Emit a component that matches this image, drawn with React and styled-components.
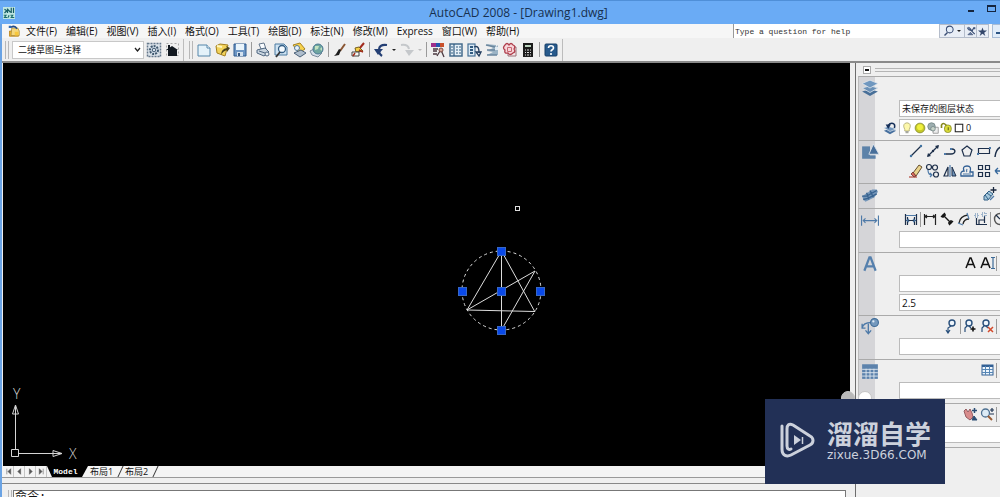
import React from "react";
import styled, { createGlobalStyle, css } from "styled-components";

const GlobalStyle = createGlobalStyle`
  *, *::before, *::after { box-sizing: border-box; }
  html, body, #root { height: 100%; }
  body {
    margin: 0;
    overflow: hidden;
    font-family: "Open Sans", "Noto Sans CJK SC", sans-serif;
    color: #111;
    background: #efefef;
  }
  button, input, select { font: inherit; color: inherit; margin: 0; padding: 0; border-radius: 0; }
`;

/* ---------- drawings ---------- */

const line = { fill: "none", stroke: "#1d2f4a", strokeWidth: 1.2 };
const blue = { fill: "none", stroke: "#4e7aa8", strokeWidth: 1.2 };

const glyphs = {
  app: (
    <>
      <rect x="0" y="0" width="16" height="16" fill="#bfe6e2" />
      <path d="M2 3l3 2-3 3M6 2v6M6 3l4 4M11 1v7M14 1v7" fill="none" stroke="#175d63" strokeWidth="1.6" />
      <path d="M1 11h3l-2 3h4M8 11l-1 3M10 11h3l-2 3h4" fill="none" stroke="#1d6d6c" strokeWidth="1.5" />
    </>
  ),
  doc: (
    <>
      <path d="M2 8h12v7H2z" fill="#efb52c" stroke="#b67c12" />
      <path d="M5 4h8l2 4v6H4z" fill="#f5d77c" stroke="#a98a3a" />
      <path d="M1 1h3v3H1z" fill="#3069b1" />
      <path d="M4 3q5-3 8 2" fill="none" stroke="#234c8a" strokeWidth="2" />
      <path d="M9 9h5v5H9z" fill="#f7c73c" />
    </>
  ),
  gear: (
    <>
      <path d="M1.500 1.500h13v13h-13z" fill="#dde5ec" stroke="#66798c" strokeDasharray="2 1" strokeWidth="1.500" />
      <circle cx="8" cy="8" r="4" fill="#d7e2ed" stroke="#3f586f" strokeWidth="2" strokeDasharray="2 1" />
      <circle cx="8" cy="8" r="1.800" fill="none" stroke="#3f586f" />
    </>
  ),
  home: (
    <>
      <path d="M2.500 1.500h12v12h-12z" fill="none" stroke="#aaa" strokeDasharray="2 2" />
      <path d="M2 8l6-4 6 4h-1v6H4V8z" fill="#111820" />
      <path d="M4 3h2v4H4z" fill="#111820" />
    </>
  ),
  file: (
    <>
      <path d="M2 3h9l3 3v8H2z" fill="#e4f2fa" stroke="#5486aa" />
      <path d="M11 3v3h3" fill="#fff" stroke="#5486aa" />
    </>
  ),
  open: (
    <>
      <path d="M2 4l4-2 8 1-3 11-8-3z" fill="#f2d25a" stroke="#a37f20" />
      <path d="M7 13q0-6 6-7l-1-2 4 2-3 4v-2q-4 1-6 5z" fill="#494219" />
      <path d="M3 4l5 1" stroke="#fff6c0" strokeWidth="2" />
    </>
  ),
  save: (
    <>
      <path d="M2 2h12v12H2z" fill="#6c95c3" stroke="#2f5a8e" />
      <path d="M4 2h8v6H4z" fill="#e9f4fb" />
      <path d="M5 10h6v4H5z" fill="#d3e1ee" />
      <path d="M6 11h2v3H6z" fill="#33557f" />
    </>
  ),
  print: (
    <>
      <path d="M4 2l5-1 2 6H6z" fill="#f9fcff" stroke="#63758a" />
      <path d="M2 8l8-2 4 4-5 4-7-3z" fill="#c8d4df" stroke="#4f6781" />
      <path d="M4 9l6 2" stroke="#4f6781" />
      <circle cx="12" cy="12" r="2" fill="#e7edf2" stroke="#4f6781" />
    </>
  ),
  preview: (
    <>
      <path d="M2 2h9l3 3v8H2z" fill="#cfe3f2" stroke="#4b7aa1" />
      <circle cx="9" cy="7" r="3.500" fill="#f5fbff" stroke="#345f86" strokeWidth="1.300" />
      <path d="M7 10l-4 5" stroke="#333" strokeWidth="1.800" />
    </>
  ),
  publish: (
    <>
      <path d="M2 3l7-2 5 6-6 4z" fill="#f7d24c" stroke="#a78221" />
      <circle cx="6" cy="6" r="2.500" fill="#e8f3fb" stroke="#54799a" />
      <path d="M3 11l7-3 5 3-6 4z" fill="#aebdcc" stroke="#4b6178" />
    </>
  ),
  globe: (
    <>
      <path d="M1 9l6-3 6 5-4 4-6-2z" fill="#d4dfe8" stroke="#7b8c9d" />
      <circle cx="9" cy="7" r="5" fill="#6fa6a0" stroke="#4b7894" />
      <path d="M6 4l4 0-1 3-3 1zM11 7l2-2v4z" fill="#c3e2c0" />
    </>
  ),
  brush: (
    <>
      <path d="M13 2L8 9" stroke="#8a5633" strokeWidth="2" />
      <path d="M9 8l-2-1-3 5-2 2 5-1z" fill="#1c1c1c" />
    </>
  ),
  match: (
    <>
      <path d="M14 1L9 7" stroke="#a22b1e" strokeWidth="2" />
      <path d="M5 6l4-1 4 4-7 1z" fill="#f4d046" stroke="#78601d" />
      <path d="M2 10h7v4H2z" fill="#f8f8f3" stroke="#454545" />
      <path d="M5 11l-2 3M9 8l4 2" stroke="#a22b1e" strokeWidth="1.500" />
    </>
  ),
  undo: (
    <>
      <path d="M14 3Q7 2 6 7q-1 4 3 7" fill="none" stroke="#243f74" strokeWidth="2.200" />
      <path d="M1 7h9l-5 6z" fill="#243f74" />
    </>
  ),
  redo: (
    <>
      <path d="M2 3q7-1 8 4" fill="none" stroke="#c5c8cb" strokeWidth="2" />
      <path d="M6 8h9l-5 6z" fill="#c5c8cb" />
    </>
  ),
  props: (
    <>
      <path d="M1 1h5v4H1z" fill="#a02f8a" />
      <path d="M6 1h4v4H6z" fill="#2757b0" />
      <path d="M10 1h4v4h-4z" fill="#c9502a" />
      <path d="M3 7h5M3 9h4M3 12h4M11 8l3 7M10 9l-3 5" stroke="#4a3940" strokeWidth="1.300" />
      <circle cx="11" cy="8" r="2" fill="#d5a597" stroke="#784a42" />
    </>
  ),
  center: (
    <>
      <rect x="2" y="2" width="12" height="12" fill="#e6f0f7" stroke="#466c8d" strokeWidth="1.500" />
      <path d="M6 2v12M8 5h2m1 0h2M8 8h2m1 0h2M8 11h2m1 0h2M3 5h2M3 8h2M3 11h2" stroke="#315b80" strokeWidth="1.200" />
    </>
  ),
  palettes: (
    <>
      <rect x="2" y="2" width="7" height="12" fill="#dceaf5" stroke="#477196" strokeWidth="1.200" />
      <path d="M4 5h3M4 8h3M4 11h3" stroke="#315b80" strokeWidth="2" />
      <path d="M8 5c5-2 5 3 5 6M10 10h5l-2 4z" fill="none" stroke="#233e60" strokeWidth="1.300" />
    </>
  ),
  sheets: (
    <>
      <path d="M2 2l10 1v2l2-2v10H3l6-3-6-1 6-3z" fill="#9bb3c5" />
      <path d="M2 3l9 2M3 8h8M3 13h10" stroke="#6b879e" strokeWidth="1.400" />
      <path d="M11 5h3v3h-3z" fill="#e0ebf2" />
    </>
  ),
  markup: (
    <>
      <path d="M6 5h8v9H6z" fill="#f5e9ea" stroke="#9b7178" />
      <path d="M3 3q2-3 4 0 2-3 4 0 3 1 1 4 2 3-1 4-3 3-5 0-4 1-3-3-3-2 0-5z" fill="#f6d5d9" stroke="#b03e4c" strokeWidth="1.300" />
      <path d="M5.500 5.500h4v4h-4z" fill="none" stroke="#c86772" />
    </>
  ),
  calc: (
    <>
      <rect x="3" y="1" width="10" height="14" fill="#1b1b1b" />
      <path d="M5 3h6v2H5z" fill="#b9d3bd" />
      <path d="M5 8h1m1 0h2m1 0h1M5 10.500h1m1 0h2m1 0h1M5 13h1m1 0h2m1 0h1" stroke="#ddd" strokeWidth="1.200" />
    </>
  ),
  help: (
    <>
      <rect x="2" y="2" width="12" height="12" rx="1" fill="#275a8c" stroke="#173f68" />
      <path d="M5.500 6c0-3 5-3 5 0 0 2-2.500 1.500-2.500 3.500M8 11v2" fill="none" stroke="#fff" strokeWidth="1.600" />
    </>
  ),
  search: (
    <>
      <circle cx="9" cy="6" r="4.500" fill="#e4edf8" stroke="#3b4e75" strokeWidth="1.400" />
      <path d="M6 10l-4 4" stroke="#3b4e75" strokeWidth="2" />
    </>
  ),
  comm: (
    <>
      <path d="M2 3q4-3 7 4-6 1-7-4z" fill="#66799e" stroke="#364a71" />
      <path d="M6 5l8 8M9 9l4-7M14 2v3" fill="none" stroke="#364a71" strokeWidth="1.800" />
      <path d="M3 14l4-4 4 4z" fill="#66799e" stroke="#364a71" />
    </>
  ),
  star: <path d="M8 1l2 5h6l-5 4 2 6-5-4-5 4 2-6-5-4h6z" fill="#33466a" />,
  layers: (
    <>
      <path d="M1 11l7-2 7 2-7 4z" fill="#486f98" />
      <path d="M1 8l7-2 7 2-7 4z" fill="#6a90b6" stroke="#dfe6ec" strokeWidth=".7" />
      <path d="M1 4l7-3 7 3-7 4z" fill="#6f97bf" stroke="#dfe6ec" strokeWidth=".7" />
    </>
  ),
  shapes: (
    <>
      <path d="M1 3h7v11H1z" fill="#5c82a9" />
      <path d="M8 11h5v3H8z" fill="#5c82a9" />
      <path d="M11 1l5 9H7z" fill="#486f9a" stroke="#dce3ea" strokeWidth=".8" />
    </>
  ),
  dash: (
    <>
      <path d="M1 9l9-6h4l1 2-3 5-8 4-2-2z" fill="#7496b9" />
      <path d="M1 9h4l9-5M2 12l4-1 8-4M5 6l2 6M8 4l3 6" fill="none" stroke="#39638f" strokeWidth="1.200" />
    </>
  ),
  dim: <path d="M.500 4v9M15.500 4v9M2 8.500h12M4 6.500l-2 2 2 2M12 6.500l2 2-2 2" {...blue} strokeWidth="1" />,
  bigA: <path d="M3 14L7.500 2h1L13 14M5 10h6" fill="none" stroke="#5580ad" strokeWidth="2" />,
  leader: (
    <>
      <path d="M1 9q1-5 8-5M6.500 5v9M1 5v4h3M4 11l2.500 3L9 11" {...blue} />
      <circle cx="12" cy="4" r="3.500" fill="#7599bd" stroke="#426e99" />
      <circle cx="11" cy="3" r="1" fill="#e2edf7" />
    </>
  ),
  table: (
    <>
      <rect x="1" y="2" width="14" height="13" fill="#5c82ac" />
      <path d="M1 6.500h14M1 9.500h14M1 12.500h14M4.500 6v9M8 6v9M11.500 6v9" stroke="#e0e8ef" strokeWidth=".8" />
    </>
  ),
  tableSm: (
    <>
      <rect x="3" y="3" width="11" height="10" fill="#edf5fc" stroke="#315f94" />
      <path d="M3 4h11" stroke="#315f94" strokeWidth="2" />
      <path d="M3 7.500h11M3 10.500h11M6.500 4v9M10.500 4v9" stroke="#5686b5" />
    </>
  ),
  layerPrev: (
    <>
      <path d="M1 11l6-2 8 2-7 4z" fill="#466f9e" />
      <path d="M1 8l5-2 9 3-7 3z" fill="#7497bd" stroke="#e5ebf0" strokeWidth=".7" />
      <path d="M13 8c2-6-4-7-7-3" fill="none" stroke="#16305a" strokeWidth="1.800" />
      <path d="M3 4h6l-3 5z" fill="#16305a" />
    </>
  ),
  bulb: (
    <>
      <path d="M5 10Q1 2 8 1q7 1 3 9v2H5z" fill="#fdf8ac" stroke="#a6a16b" />
      <path d="M6 12h4v3H6z" fill="#a7a89f" />
    </>
  ),
  sun: (
    <>
      <circle cx="8" cy="8" r="6.500" fill="#c5c929" stroke="#80862b" />
      <circle cx="8" cy="7" r="4" fill="#f0f03e" />
    </>
  ),
  vpFreeze: (
    <>
      <path d="M8 7h7v8H8z" fill="#eee" stroke="#888" />
      <circle cx="6" cy="6" r="5" fill="#9daeaf" stroke="#6d8081" />
      <circle cx="8" cy="9" r="3" fill="#c7d3c9" stroke="#6d8081" />
    </>
  ),
  lock: (
    <>
      <path d="M2 8V4q2-4 6 0v2" fill="none" stroke="#85861e" strokeWidth="2.200" />
      <rect x="6" y="4" width="9" height="10" rx="4" fill="#dadc39" stroke="#7f831f" />
      <path d="M11 7v4" stroke="#6a6a1a" strokeWidth="1.500" />
    </>
  ),
  swatch: <rect x="3" y="3" width="10" height="10" fill="#fff" stroke="#222" strokeWidth="1.400" />,
  line: (
    <>
      <path d="M3 13L13 3" {...line} />
      <circle cx="3" cy="13" r="1.200" fill="#3f72a0" />
      <circle cx="13" cy="3" r="1.200" fill="#3f72a0" />
    </>
  ),
  ray: (
    <>
      <path d="M3 13L13 3" {...line} strokeWidth="1.300" />
      <path d="M2 14l1-4 3 3zM14 2l-1 4-3-3z" fill="#1d2f4a" />
      <circle cx="8" cy="8" r="1.200" fill="#1d2f4a" />
    </>
  ),
  pline: (
    <>
      <path d="M3 11h6c5 0 5-5 1-5H8" {...line} strokeWidth="1.400" />
      <path d="M2 10h2v2H2zM8 5h2v2H8z" fill="#4e7aa8" />
    </>
  ),
  polygon: <path d="M8 3l5 4-2 6H5L3 7z" {...line} />,
  rect: (
    <>
      <path d="M2.500 5.500h11v5h-11z" {...line} />
      <path d="M1 10h2v2H1zM13 4h2v2h-2z" fill="#4e7aa8" />
    </>
  ),
  arc: <path d="M2 14Q3 3 13 3" {...line} strokeWidth="1.500" />,
  erase: (
    <>
      <path d="M1 14h8" stroke="#b3473b" strokeWidth="1.200" />
      <path d="M5 10l6-8 3 2-6 9z" fill="#ead48d" stroke="#66502f" />
      <path d="M3 11l2-2 3 4-2 1z" fill="#d7685e" stroke="#66332b" strokeWidth=".8" />
    </>
  ),
  copy: (
    <>
      <circle cx="4" cy="4" r="2.500" {...line} />
      <circle cx="10" cy="4.500" r="2.500" {...line} />
      <circle cx="11" cy="11.500" r="2.500" {...line} />
      <path d="M3 7q0 5 4 5M5 10l2 2-2 2" {...blue} />
    </>
  ),
  mirror: (
    <>
      <path d="M6 4v9H2z" {...line} />
      <path d="M10 4v9h4z" fill="#6f93b8" stroke="#1d2f4a" />
      <path d="M8 2v12" {...blue} />
    </>
  ),
  offset: (
    <>
      <path d="M2 13h12v-4h-3q2-6-3-6T5 8Q1 8 2 13z" fill="none" stroke="#315f94" strokeWidth="1.300" />
      <path d="M4 11h8M8 6q-1 2 0 3" {...blue} />
    </>
  ),
  array: <path d="M2.500 2.500h4v4h-4zM9.500 2.500h4v4h-4zM2.500 9.500h4v4h-4zM9.500 9.500h4v4h-4z" {...line} />,
  move: <path d="M8 2v12M2 8h12M2 8l3-3M2 8l3 3M8 2l3 3M8 14l3-3" fill="none" stroke="#33659a" strokeWidth="1.300" />,
  blockEdit: (
    <>
      <path d="M3 10l5-5 4 3-5 6H3z" fill="#a4c7dc" stroke="#315f84" />
      <path d="M6 7l4 3M4 9l3 4" stroke="#315f84" />
      <path d="M12.500 1v6M9.500 4h6" stroke="#18263c" strokeWidth="1.300" />
      <path d="M9 14l4-4" {...blue} />
    </>
  ),
  qdim: (
    <>
      <path d="M2.500 3v11M13.500 3v11M4.500 6v8M11.500 6v8M3 9.500h10" {...line} strokeWidth="1.200" />
      <path d="M3 4.500h10M6 8l-2 1.500L6 11M10 8l2 1.500L10 11" {...blue} />
    </>
  ),
  linear: <path d="M2.500 3v11M13.500 3v11M3 5.500h10M5 4L3 5.500 5 7M11 4l2 1.500L11 7" fill="none" stroke="#222" strokeWidth="1.200" />,
  aligned: <path d="M6 2L2 6M14 10l-4 4M4 4l8 8M4 7V4h3M12 9v3H9" fill="none" stroke="#151515" strokeWidth="1.400" />,
  arcLen: (
    <>
      <path d="M3 12Q4 5 12 4M7 13q1-5 6-5" fill="none" stroke="#222" strokeWidth="1.300" />
      <path d="M2 12l5 2M11 2l2 6" {...blue} />
    </>
  ),
  ordinate: (
    <>
      <path d="M3.500 7v6.500H14M6 13V9h5M11.500 5v7" {...line} />
      <path d="M2 3h3v3H2zM9 2h4v3H9z" fill="none" stroke="#4e7aa8" strokeDasharray="1 1" />
    </>
  ),
  radius: (
    <>
      <circle cx="8" cy="8" r="5.500" fill="none" stroke="#555" strokeWidth="1.400" />
      <path d="M8 8L4 4" {...line} />
    </>
  ),
  textA: <path d="M4 13L8 3h1l4 10M5.500 9.500h6" fill="none" stroke="#111" strokeWidth="1.500" />,
  textEdit: (
    <>
      <path d="M2 13L6 3h1l4 10M3.500 9.500h6" fill="none" stroke="#111" strokeWidth="1.500" />
      <path d="M12 2.500h4M12 13.500h4M14 3v10" stroke="#3d6a96" strokeWidth="1.200" />
    </>
  ),
  pin: (
    <>
      <circle cx="9" cy="5" r="3" fill="#eef5fb" stroke="#284f7b" strokeWidth="1.400" />
      <path d="M8 8l-3 2v4M3 12l2 3 2-3" fill="none" stroke="#284f7b" strokeWidth="1.200" />
    </>
  ),
  pinAdd: (
    <>
      <circle cx="7" cy="5" r="3" fill="#eef5fb" stroke="#284f7b" strokeWidth="1.400" />
      <path d="M5 8l-2 2v4M7 8l2 2" fill="none" stroke="#284f7b" strokeWidth="1.200" />
      <path d="M11 8.500v5M8.500 11h5" stroke="#111" strokeWidth="1.600" />
    </>
  ),
  pinDel: (
    <>
      <circle cx="7" cy="5" r="3" fill="#eef5fb" stroke="#284f7b" strokeWidth="1.400" />
      <path d="M5 8l-2 2v4M7 8l2 2" fill="none" stroke="#284f7b" strokeWidth="1.200" />
      <path d="M9 9l5 5M14 9l-5 5" stroke="#d34a2c" strokeWidth="1.500" />
    </>
  ),
  pan: (
    <>
      <path d="M2 5l2-2 2 3 2-3 2 4 1 4-3 3-4-3z" fill="#d98c8c" stroke="#945c61" />
      <path d="M12.500 2v5M10 4.500h5" stroke="#2b4c73" strokeWidth="1.500" />
      <path d="M10 14l2-4 3 4z" fill="#2b4c73" stroke="#2b4c73" />
    </>
  ),
  zoom: (
    <>
      <circle cx="6.500" cy="7" r="4" fill="#dcebf6" stroke="#4d7091" strokeWidth="1.300" />
      <path d="M9 10l4 4" stroke="#9a5d35" strokeWidth="2" />
      <path d="M13 2v4M11 4h4M11 8h4" stroke="#1f3553" strokeWidth="1.200" />
    </>
  ),
  first: <path d="M5 3v10M12 3v10L7 8z" fill="#555" stroke="#555" />,
  prev: <path d="M10 3v10L5 8z" fill="#555" stroke="#555" />,
  next: <path d="M6 3v10l5-5z" fill="#555" stroke="#555" />,
  last: <path d="M11 3v10M4 3v10l5-5z" fill="#555" stroke="#555" />,
};

function Glyph({ name, size = 16 }) {
  return (
    <svg width={size} height={size} viewBox="0 0 16 16" aria-hidden="true">
      {glyphs[name]}
    </svg>
  );
}

/* ---------- window frame ---------- */

const Window = styled.div`
  display: flex;
  flex-direction: column;
  height: 100vh;
  overflow: hidden;
`;

const TitleBar = styled.header`
  display: grid;
  grid-template-columns: 1fr auto 1fr;
  align-items: center;
  flex: none;
  height: 24px;
  padding-left: 3px;
  background: #6aabf5;
  border-top: 1px solid #4f8fd8;
  svg { display: block; }
`;

const Title = styled.h1`
  margin: 0;
  padding-left: 34px;
  font-size: 12px;
  line-height: 22px;
  font-weight: 400;
  color: #17304f;
`;

const WindowButtons = styled.div`
  display: flex;
  justify-content: flex-end;
  align-self: start;
  gap: 10px;
  padding: 3px 4px 0 0;
`;

const WindowButton = styled.button`
  width: 10px;
  height: 9px;
  border: 0;
  background: none;
  &::before {
    content: "";
    display: block;
    margin: 0 auto;
    ${({ $kind }) =>
      $kind === "min"
        ? css`width: 6px; height: 2px; margin-top: 5px; background: #15253f;`
        : css`width: 9px; height: 7px; border: 1px solid #15253f; border-top-width: 2px;`}
  }
`;

const Frame = styled.div`
  display: flex;
  flex-direction: column;
  flex: 1;
  min-height: 0;
  border-left: 2px solid #6aa3e4;
`;

/* ---------- menu ---------- */

const MenuBar = styled.nav`
  display: flex;
  align-items: center;
  flex: none;
  height: 14px;
  padding-left: 6px;
  background: #f6f6f6;
  svg { display: block; }
`;

const MenuList = styled.ul`
  display: flex;
  gap: 9px;
  margin: 0 auto 0 6px;
  padding: 0;
  list-style: none;
`;

const MenuItem = styled.button`
  display: block;
  border: 0;
  background: none;
  font-size: 10px;
  line-height: 14px;
  white-space: nowrap;
`;

const HelpInput = styled.input`
  width: 206px;
  height: 14px;
  padding-left: 1px;
  border: 0;
  border-left: 1px solid #999;
  background: #fff;
  font-family: "Liberation Mono", monospace;
  font-size: 8px;
  &::placeholder { color: #333; opacity: 1; }
`;

const InfoButton = styled.button`
  display: flex;
  align-items: center;
  justify-content: center;
  gap: 2px;
  width: ${({ $wide }) => ($wide ? 26 : 12)}px;
  height: 14px;
  border: 1px solid #b5bdcb;
  border-left-width: ${({ $wide }) => ($wide ? 1 : 0)}px;
  background: #e9eef6;
`;

const DocButton = styled.button`
  width: 8px;
  height: 14px;
  margin-left: 3px;
  border: 1px solid #a9bdd6;
  border-right: 0;
  background: #e2edf9;
  &::before {
    content: "";
    display: block;
    width: 5px;
    height: 2px;
    margin: 4px 0 0 3px;
    background: #2e5685;
  }
`;

/* ---------- toolbars ---------- */

const ToolbarRow = styled.div`
  display: flex;
  align-items: center;
  flex: none;
  height: 25px;
  background: #efefef;
  border-bottom: 2px solid #8b8b8b;
`;

const Toolbar = styled.div`
  display: flex;
  align-items: center;
  gap: 2px;
  height: 22px;
  padding: 0 3px;
  border-right: 1px solid #bcbcbc;
  & + & { margin-left: 2px; }
`;

const Grip = styled.span`
  flex: none;
  width: 4px;
  height: ${({ $h = 18 }) => $h}px;
  margin-right: 1px;
  border: solid #b7b7b7;
  border-width: 0 1px;
`;

const ToolButton = styled.button`
  display: flex;
  align-items: center;
  justify-content: center;
  flex: none;
  width: ${({ $w = 16 }) => $w}px;
  height: 16px;
  border: 0;
  background: none;
`;

const Caret = styled.span`
  width: 0;
  height: 0;
  border: 2px solid transparent;
  border-top-color: ${({ $off }) => ($off ? "#bbb" : "#222")};
  border-bottom: 0;
`;

const Sep = styled.span`
  flex: none;
  width: 1px;
  height: 15px;
  margin: 0 ${({ $m = 0 }) => $m}px;
  background: #9a9a9a;
`;

const Combo = styled.div`
  display: flex;
  align-items: center;
  width: 132px;
  height: 18px;
  padding-right: 2px;
  background: #fff;
  border: 1px solid #c8c8c8;
`;

const PlainSelect = styled.select`
  flex: 1;
  min-width: 0;
  height: 100%;
  padding-left: ${({ $pad = 2 }) => $pad}px;
  appearance: none;
  border: 0;
  background: none;
  font-size: 9px;
`;

/* ---------- work area ---------- */

const Work = styled.div`
  display: flex;
  flex: 1;
  min-height: 0;
`;

const Editor = styled.main`
  display: flex;
  flex-direction: column;
  flex: 1;
  min-width: 0;
`;

const Canvas = styled.section`
  position: relative;
  flex: 1;
  min-height: 0;
  margin: 0 5px 0 1px;
  background: #000;
  overflow: hidden;
`;

const Sketch = styled.svg`
  position: absolute;
  top: 140px;
  left: 450px;
`;

const Ucs = styled.svg`
  position: absolute;
  left: 0;
  bottom: 0;
  font-family: "Open Sans", sans-serif;
  font-weight: 300;
`;

const TabRow = styled.div`
  display: flex;
  flex: none;
  height: 12px;
  padding-left: 1px;
  background: #f4f4f4;
  border-bottom: 1px solid #999;
`;

const TabNav = styled.button`
  display: flex;
  align-items: center;
  justify-content: center;
  width: 11px;
  height: 11px;
  border: 0;
  border-right: 1px solid #c5c5c5;
  background: #f4f4f4;
`;

const Tab = styled.button`
  position: relative;
  z-index: 0;
  width: 35px;
  height: 11px;
  border: 0;
  background: none;
  font-size: 9px;
  line-height: 11px;
  white-space: nowrap;
  &::before {
    content: "";
    position: absolute;
    z-index: -1;
    inset: 0 -2px 0 0;
    border-right: 1px solid #333;
    transform: skewX(-25deg);
  }
  ${({ $active }) =>
    $active &&
    css`
      width: 37px;
      color: #fff;
      font-family: "Liberation Mono", monospace;
      font-size: 8px;
      font-weight: 700;
      &::before {
        inset: 0 -4px 0 0;
        background: #000;
        border: 0;
        transform: none;
        clip-path: polygon(0 0, 100% 0, 35px 100%, 5px 100%);
      }
    `}
`;

const CommandBar = styled.div`
  display: flex;
  flex: none;
  height: 14px;
  margin-top: 5px;
  padding: 6px 9px 0 6px;
  border-top: 1px solid #888;
  overflow: hidden;
`;

const CommandLine = styled.label`
  display: flex;
  flex: 1;
  height: 20px;
  padding-left: 1px;
  border: 1px solid #777;
  background: #fff;
  font-family: "Liberation Mono", "Noto Sans CJK SC", monospace;
  font-size: 12px;
  line-height: 14px;
  white-space: nowrap;
  input { flex: 1; min-width: 0; border: 0; background: none; }
`;

/* ---------- dashboard ---------- */

const Dashboard = styled.aside`
  flex: none;
  width: 145px;
  overflow: hidden;
  background: #efefef;
  border-left: 1px solid #6d6d6d;
`;

const DashHeader = styled.div`
  display: flex;
  align-items: center;
  gap: 4px;
  height: 13px;
  padding: 0 0 0 7px;
`;

const Collapse = styled.button`
  display: flex;
  align-items: center;
  justify-content: center;
  width: 8px;
  height: 8px;
  border: 1px solid #aaa;
  background: #fff;
  &::before { content: ""; width: 4px; height: 2px; background: #111; }
`;

const HeaderRule = styled.span`
  flex: 1;
  height: 4px;
  border: solid #b5b5b5;
  border-width: 1px 0;
`;

const Panel = styled.section`
  display: grid;
  grid-template-columns: 18px 1fr;
  column-gap: 3px;
  min-height: 25px;
  margin-left: 2px;
  padding: 0 0 4px 2px;
  border-top: 1px solid #aaa;
  border-left: 1px solid #bbb;
  background: linear-gradient(90deg, #d5d5d8 16px, #efefef 16px);
  &:last-child { border-bottom: 1px solid #aaa; }
`;

const PanelMark = styled.span`
  height: 18px;
  margin-top: 2px;
  svg { display: block; }
`;

const PanelBody = styled.div`
  display: flex;
  flex-direction: column;
  gap: 2px;
  min-width: 0;
`;

const IconRow = styled.div`
  display: flex;
  align-items: center;
  justify-content: ${({ $end }) => ($end ? "flex-end" : "flex-start")};
  gap: 1px;
  height: ${({ $h = 20 }) => $h}px;
  padding-left: ${({ $indent = 0 }) => $indent}px;
  padding-right: ${({ $end }) => ($end ? 3 : 0)}px;
`;

const FieldRow = styled.div`
  display: grid;
  grid-template-columns: 16px 1fr;
  column-gap: 1px;
  align-items: center;
`;

const Field = styled.div`
  display: flex;
  align-items: center;
  grid-column: 2;
  min-width: 0;
  height: 17px;
  border: 1px solid #bbb;
  border-right: 0;
  background: #fff;
  font-size: 9px;
  & > svg { flex: none; margin-left: 1px; }
  input {
    width: 100%;
    height: 100%;
    padding-left: 2px;
    border: 0;
    background: none;
    font-size: 10px;
  }
`;

/* ---------- brand card ---------- */

const Brand = styled.div`
  position: absolute;
  right: 55px;
  bottom: 13px;
  display: flex;
  align-items: center;
  gap: 12px;
  width: 180px;
  height: 85px;
  padding: 0 0 4px 15px;
  background: #223056;
  color: #ccd1dc;
  svg { display: block; flex: none; }
`;

const Bubbles = styled.div`
  position: absolute;
  right: 128px;
  bottom: 92px;
  display: flex;
  gap: 3px;
`;

const Bubble = styled.span`
  width: 14px;
  height: 14px;
  border-radius: 50%;
  background: ${({ $c }) => $c};
  border: 1px solid #c5c5c5;
`;

const BrandName = styled.div`
  font-family: "Noto Sans CJK SC", sans-serif;
  font-weight: 700;
  font-size: 26px;
  line-height: 30px;
`;

const BrandUrl = styled.div`
  font-family: "DejaVu Sans", sans-serif;
  font-size: 12px;
  line-height: 14px;
`;

/* ---------- data ---------- */

const menus = ["文件(F)", "编辑(E)", "视图(V)", "插入(I)", "格式(O)", "工具(T)", "绘图(D)", "标注(N)", "修改(M)", "Express", "窗口(W)", "帮助(H)"];

const standard = [
  "file", "open", "save", "|", "print", "preview", "publish", "globe", "|", "brush", "match", "|",
  "undo", "v", "redo", "x", "|", "props", "center", "palettes", "sheets", "markup", "calc", "|", "help",
];

function Tools({ items, sepMargin = 0 }) {
  return items.map((item, i) => {
    if (item === "|") return <Sep key={i} $m={sepMargin} />;
    if (item === "v" || item === "x")
      return (
        <ToolButton key={i} $w={6} aria-label="more">
          <Caret $off={item === "x"} />
        </ToolButton>
      );
    return (
      <ToolButton key={i} aria-label={item}>
        <Glyph name={item} />
      </ToolButton>
    );
  });
}

const panels = [
  { mark: "shapes", rows: [{ h: 20, indent: 26, items: ["line", "ray", "pline", "polygon", "rect", "arc"] }, { h: 16, indent: 26, items: ["erase", "copy", "mirror", "offset", "array", "move"] }] },
  { mark: "dash", rows: [{ end: true, items: ["blockEdit"] }] },
  { mark: "dim", rows: [{ indent: 21, items: ["qdim", "|", "linear", "aligned", "arcLen", "ordinate", "|", "radius"] }], fields: ["select"] },
  { mark: "bigA", rows: [{ end: true, items: ["textA", "textEdit", "|"] }], fields: ["select", "input"] },
  { mark: "leader", rows: [{ end: true, items: ["pin", "|", "pinAdd", "pinDel", "|"] }], fields: ["select"] },
  { mark: "table", rows: [{ end: true, items: ["tableSm", "|"] }], fields: ["select"] },
  { mark: "zoom", rows: [{ end: true, items: ["pan", "zoom", "|"] }], fields: ["select"] },
];

const grips = [[51, 48], [12, 88], [51, 88], [90, 88], [51, 127]];

function Drawing() {
  return (
    <Sketch width="110" height="140" viewBox="0 0 110 140" fill="none" stroke="#ddd">
      <rect x="62.500" y="3.500" width="4" height="4" />
      <circle cx="48.500" cy="87.500" r="39.500" strokeDasharray="3 3" />
      <path d="M48.500 48v79M48.500 48L14 107M48.500 48L82 109M82 68L14 107M82 68L48.500 127M14 107l68 1.500" />
      {grips.map(([x, y]) => (
        <rect key={`${x}-${y}`} x={x - 6.5} y={y - 3.5} width="8" height="8" fill="#0a49e8" stroke="#3767c4" />
      ))}
    </Sketch>
  );
}

export default function App() {
  return (
    <Window>
      <GlobalStyle />
      <TitleBar>
        <Glyph name="app" size={12} />
        <Title>AutoCAD 2008 - [Drawing1.dwg]</Title>
        <WindowButtons>
          <WindowButton $kind="min" aria-label="Minimize" />
          <WindowButton $kind="max" aria-label="Maximize" />
        </WindowButtons>
      </TitleBar>
      <Frame>
        <MenuBar>
          <Glyph name="doc" size={12} />
          <MenuList>
            {menus.map((m) => (
              <li key={m}><MenuItem>{m}</MenuItem></li>
            ))}
          </MenuList>
          <HelpInput aria-label="Help" placeholder="Type a question for help" />
          <InfoButton $wide aria-label="Search"><Glyph name="search" size={12} /><Caret /></InfoButton>
          <InfoButton aria-label="Communication Center"><Glyph name="comm" size={10} /></InfoButton>
          <InfoButton aria-label="Favorites"><Glyph name="star" size={9} /></InfoButton>
          <DocButton aria-label="Minimize drawing" />
        </MenuBar>

        <ToolbarRow>
          <Toolbar>
            <Grip />
            <Combo>
              <PlainSelect $pad={5} aria-label="工作空间"><option>二维草图与注释</option></PlainSelect>
              <svg width="7" height="5" viewBox="0 0 7 5" aria-hidden="true"><path d="M1 1l2.500 3L6 1" fill="none" stroke="#222" strokeWidth="1.300" /></svg>
            </Combo>
            <Tools items={["gear", "home"]} />
          </Toolbar>
          <Toolbar>
            <Grip />
            <Tools items={standard} sepMargin={1} />
          </Toolbar>
        </ToolbarRow>

        <Work>
          <Editor>
            <Canvas>
              <Drawing />
              <Ucs width="90" height="84" viewBox="0 1 90 84" fill="none" stroke="#d5d5d5">
                <path d="M8.500 68.500h7v7h-7zM12.500 68V25M16 72.500h43M12.500 24l-3 9h6zM59 72.500l-9-3v6z" />
                <g fill="#d5d5d5" stroke="none" fontSize="14">
                  <text x="10" y="18">Y</text>
                  <text x="66" y="78">X</text>
                </g>
              </Ucs>
            </Canvas>
            <TabRow>
              {["first", "prev", "next", "last"].map((n) => (
                <TabNav key={n} aria-label={n}><Glyph name={n} size={9} /></TabNav>
              ))}
              <Tab $active>Model</Tab>
              <Tab>布局1</Tab>
              <Tab>布局2</Tab>
            </TabRow>
            <CommandBar>
              <Grip $h={10} />
              <CommandLine>命令:<input /></CommandLine>
            </CommandBar>
          </Editor>

          <Dashboard>
            <DashHeader>
              <Collapse aria-label="Collapse" />
              <HeaderRule />
            </DashHeader>
            <Panel>
              <PanelMark><Glyph name="layers" size={18} /></PanelMark>
              <PanelBody>
                <IconRow $h={21} />
                <FieldRow>
                  <Field><PlainSelect aria-label="图层状态"><option>未保存的图层状态</option></PlainSelect></Field>
                </FieldRow>
                <FieldRow>
                  <ToolButton aria-label="上一个图层"><Glyph name="layerPrev" size={14} /></ToolButton>
                  <Field>
                    {["bulb", "sun", "vpFreeze", "lock"].map((n) => <Glyph key={n} name={n} size={12} />)}
                    <Glyph name="swatch" size={12} />
                    <PlainSelect $pad={1} aria-label="图层"><option>0</option></PlainSelect>
                  </Field>
                </FieldRow>
              </PanelBody>
            </Panel>
            {panels.map((p) => (
              <Panel key={p.mark}>
                <PanelMark><Glyph name={p.mark} size={18} /></PanelMark>
                <PanelBody>
                  {p.rows.map((r, i) => (
                    <IconRow key={i} $h={r.h} $indent={r.indent} $end={r.end}>
                      <Tools items={r.items} />
                    </IconRow>
                  ))}
                  {(p.fields || []).map((f) => (
                    <FieldRow key={f}>
                      <Field>
                        {f === "input" ? (
                          <input aria-label="文字高度" defaultValue="2.5" />
                        ) : (
                          <PlainSelect aria-label={`${p.mark} style`}><option></option></PlainSelect>
                        )}
                      </Field>
                    </FieldRow>
                  ))}
                </PanelBody>
              </Panel>
            ))}
          </Dashboard>
        </Work>
      </Frame>

      <Bubbles>
        <Bubble $c="#b9b9b9" />
        <Bubble $c="#fff" />
      </Bubbles>
      <Brand>
        <svg width="35" height="38" viewBox="0 0 35 38" fill="none" stroke="#ccd1dc" aria-hidden="true">
          <path d="M2 5v23c0 7 5 8 9 6l19-10c4-2 4-7 0-9L13 4C9 2 7 4 7 8v17c0 3 2 4 4 3" strokeWidth="3" strokeLinecap="round" strokeLinejoin="round" />
          <path d="M14 14v10l7-5z" fill="#ccd1dc" stroke="none" />
          <path d="M22.500 16v7" strokeWidth="1.500" />
        </svg>
        <div>
          <BrandName>溜溜自学</BrandName>
          <BrandUrl>zixue.3D66.COM</BrandUrl>
        </div>
      </Brand>
    </Window>
  );
}
